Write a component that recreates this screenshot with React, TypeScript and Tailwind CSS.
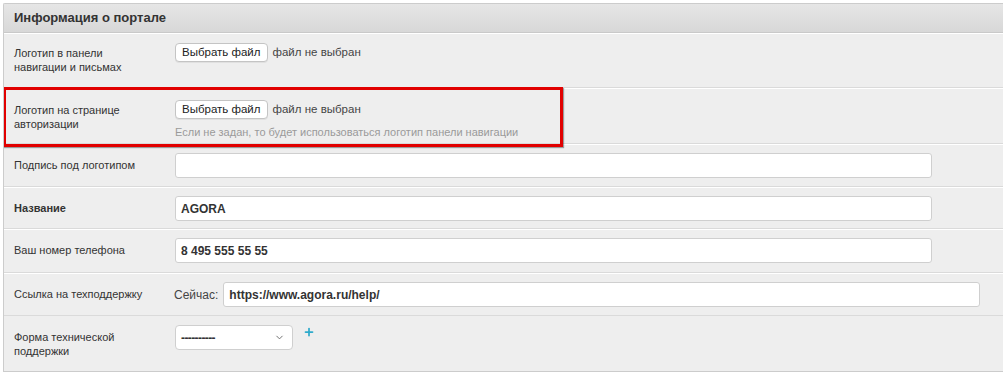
import { ChevronDown, Plus } from "lucide-react";

const font = "font-['Helvetica','Liberation_Sans',Arial,sans-serif]";

function Label({ children, bold, pt }: { children: React.ReactNode; bold?: boolean; pt: string }) {
  return (
    <div
      className={`w-[171px] shrink-0 pl-[10px] pr-2 pb-[4px] text-[11px] leading-[14px] text-[#333] ${pt} ${
        bold ? "font-bold" : ""
      }`}
    >
      {children}
    </div>
  );
}

function FilePicker() {
  return (
    <div className="flex items-center gap-[5px]">
      <button
        type="button"
        className="h-[19px] rounded-[4px] border border-[#c4c4c4] bg-white px-[6px] text-[11.5px] leading-[17px] text-[#222] shadow-[0_1px_0_rgba(0,0,0,0.06)]"
      >
        Выбрать файл
      </button>
      <span className="text-[11.5px] text-[#444]">файл не выбран</span>
    </div>
  );
}

function TextField({ value }: { value?: string }) {
  return (
    <div className="flex h-[25px] w-[757px] items-center rounded-[3px] border border-[#cfcfcf] bg-white px-[5px] text-[12px] font-bold text-[#333]">
      {value}
    </div>
  );
}

const row = "flex items-start border-t border-t-white border-b border-b-[#dadada]";

export default function App() {
  return (
    <div className={`bg-white pl-[3px] pt-[3px] ${font}`}>
      <div className="h-[369px] w-[1000px] overflow-hidden rounded-tl-[2px] border-l border-b border-t border-[#cccccc] bg-[#eeeeee]">
        <div className="flex h-[29px] items-center border-b border-b-[#c9c9c9] bg-gradient-to-b from-[#e6e6e6] to-[#d8d8d8] pl-[10px] text-[13px] font-bold text-[#333]">
          Информация о портале
        </div>

        <div className={`${row} h-[55px] pt-[9px]`}>
          <Label pt="pt-[3px]">
            Логотип в панели
            <br />
            навигации и письмах
          </Label>
          <FilePicker />
        </div>

        <div className={`${row} relative h-[56px] pt-[11px]`}>
          <div className="pointer-events-none absolute -left-[1px] -top-[2px] h-[60px] w-[560px] border-[3px] border-[#e10000] shadow-[1px_1px_1px_rgba(0,0,0,0.35)]" />
          <Label pt="pt-[3px]">
            Логотип на странице
            <br />
            авторизации
          </Label>
          <div className="flex flex-col">
            <FilePicker />
            <div className="mt-[6px] text-[11px] leading-[14px] text-[#9a9a9a]">
              Если не задан, то будет использоваться логотип панели навигации
            </div>
          </div>
        </div>

        <div className={`${row} h-[43px] pt-[8px]`}>
          <Label pt="pt-[5px]">Подпись под логотипом</Label>
          <TextField />
        </div>

        <div className={`${row} h-[42px] pt-[8px]`}>
          <Label bold pt="pt-[5px]">
            Название
          </Label>
          <TextField value="AGORA" />
        </div>

        <div className={`${row} h-[44px] pt-[8px]`}>
          <Label pt="pt-[5px]">Ваш номер телефона</Label>
          <TextField value="8 495 555 55 55" />
        </div>

        <div className={`${row} h-[43px] pt-[8px]`}>
          <Label pt="pt-[5px]">Ссылка на техподдержку</Label>
          <div className="flex items-center gap-[5px]">
            <span className="-ml-[1px] text-[12px] text-[#444]">Сейчас:</span>
            <TextField value="https://www.agora.ru/help/" />
          </div>
        </div>

        <div className="flex items-start pt-[9px]">
          <Label pt="pt-[5px]">
            Форма технической
            <br />
            поддержки
          </Label>
          <div className="flex items-start gap-[10px]">
            <div className="flex h-[25px] w-[118px] items-center justify-between rounded-[4px] border border-[#cfcfcf] bg-white pl-[5px] pr-[7px] text-[12px] font-bold text-[#333]">
              <span className="tracking-[-0.6px]">----------</span>
              <ChevronDown size={11} strokeWidth={2} className="text-[#666]" />
            </div>
            <Plus size={12} strokeWidth={3.5} className="mt-[1px] text-[#2eaacb]" />
          </div>
        </div>
      </div>
    </div>
  );
}
